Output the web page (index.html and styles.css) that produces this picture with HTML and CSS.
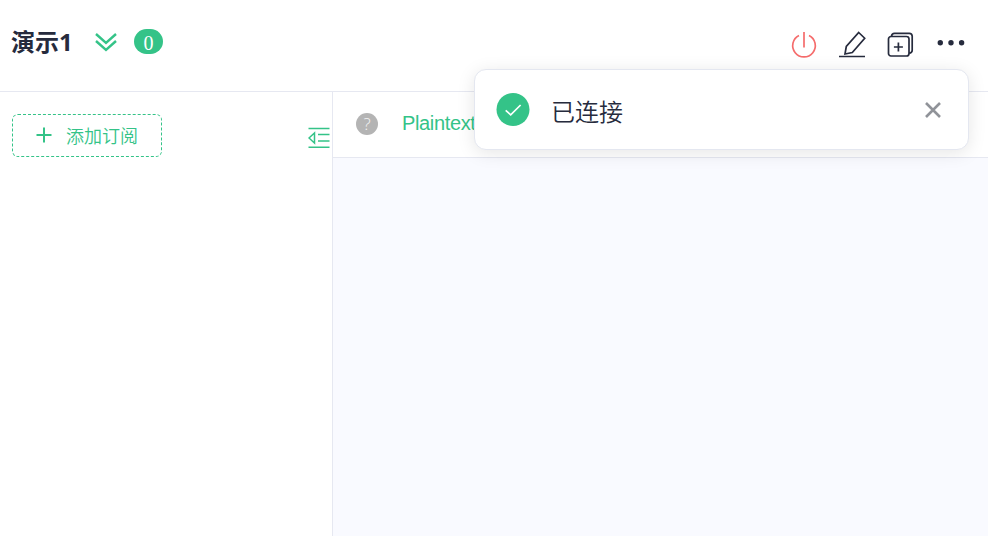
FILE: index.html
```html
<!DOCTYPE html>
<html lang="zh-CN">
<head>
<meta charset="utf-8">
<title>演示1</title>
<link rel="stylesheet" href="styles.css">
</head>
<body>
<div class="app">
  <header class="topbar">
    <h1 class="title">演示1</h1>
    <svg class="chevrons" viewBox="0 0 24 20"><path d="M2 2l10 9L22 2M2 9l10 9L22 9"/></svg>
    <span class="badge">0</span>
    <div class="actions">
      <svg class="power" viewBox="0 0 28 28"><path d="M9 5.500a11.300 11.300 0 1 0 10 0M14 2v15.500"/></svg>
      <svg class="edit" viewBox="0 0 28 28"><path d="M1 26.500h26M20.700 2.500l6 5.700L14.300 22.500 7 24l1.300-7.500z"/></svg>
      <svg class="copy" viewBox="0 0 28 28"><rect x="2.500" y="6.500" width="20.500" height="19.500" rx="2.500"/><path d="M5.500 6.300C5.700 4.300 6.600 3.300 8.500 3.300h14.700c2 0 3 1 3 3v13.900c0 1.700-1 2.700-3 3M12.400 12.500v9M7.900 17h9"/></svg>
      <svg class="dots" viewBox="0 0 28 28"><circle cx="3.300" cy="12.700" r="2.700"/><circle cx="14" cy="12.700" r="2.700"/><circle cx="24.600" cy="12.700" r="2.700"/></svg>
    </div>
  </header>
  <main class="body">
    <aside class="sidebar">
      <button class="add" type="button">
        <svg class="plus" viewBox="0 0 16 16"><path d="M8 .5v15M.5 8h15"/></svg>
        <span>添加订阅</span>
      </button>
      <svg class="fold" viewBox="0 0 22 22"><path d="M.5 1.500h21M10 7.500h11.500M10 14h11.500M.5 20.300h21M1 11l5.500-5v10z"/></svg>
    </aside>
    <section class="content">
      <div class="filters">
        <span class="help">?</span>
        <span class="format">Plaintext</span>
      </div>
      <div class="messages"></div>
    </section>
  </main>
  <div class="toast">
    <svg class="success" viewBox="0 0 34 34"><circle cx="17" cy="16.500" r="16.500"/><path d="M9.700 17.300l5 4.500L24.600 12"/></svg>
    <p class="notice">已连接</p>
    <svg class="close" viewBox="0 0 16 16"><path d="M1 1l14 14M15 1L1 15"/></svg>
  </div>
</div>
</body>
</html>
```
FILE: styles.css
```css
* { box-sizing: border-box; }

body {
  margin: 0;
  font-family: "Liberation Sans", "Noto Sans CJK SC", sans-serif;
  color: #262b3d;
  background: #fff;
}

svg {
  display: block;
  flex: none;
  fill: none;
  stroke: currentColor;
  stroke-width: 1.7;
}

.app {
  position: relative;
  display: flex;
  flex-direction: column;
  height: 536px;
  overflow: hidden;
}

.topbar {
  display: flex;
  align-items: flex-start;
  height: 92px;
  padding: 0 23px 0 11px;
  border-bottom: 1px solid #e6e8f1;
}

.title {
  width: 83px;
  margin: 24px 0 0;
  font: bold 24px/36px "Open Sans", "Noto Sans CJK SC", sans-serif;
  white-space: nowrap;
}

.chevrons {
  width: 24px;
  height: 20px;
  margin-top: 32px;
  color: #34c388;
  stroke-width: 2.4;
}

.badge {
  width: 29px;
  height: 25px;
  margin: 29px 0 0 16px;
  border-radius: 12.5px;
  background: #34c388;
  color: #fff;
  font: 20px/29px "Liberation Serif", serif;
  text-align: center;
}

.actions {
  display: flex;
  gap: 20px;
  margin: 30px 0 0 auto;
}

.actions svg { width: 28px; height: 28px; }
.actions .power { color: #f56c6c; }
.actions .dots { fill: currentColor; stroke: none; margin-left: 3px; }

.body {
  display: flex;
  flex: 1;
}

.sidebar {
  display: flex;
  justify-content: space-between;
  align-items: flex-start;
  width: 333px;
  padding: 22px 2px 0 12px;
  border-right: 1px solid #e6e8f1;
}

.add {
  display: flex;
  align-items: center;
  gap: 14px;
  width: 150px;
  height: 43px;
  padding: 0 0 1px 23px;
  border: 1px dashed #34c388;
  border-radius: 6px;
  background: #fff;
  color: #34c388;
  font: 350 18px/40px "Noto Sans CJK SC", sans-serif;
  white-space: nowrap;
}

.plus { width: 16px; height: 16px; stroke-width: 2; }

.fold {
  width: 22px;
  height: 22px;
  margin-top: 13px;
  color: #34c388;
  stroke-width: 1.5;
}

.content {
  display: flex;
  flex: 1;
  flex-direction: column;
}

.filters {
  display: flex;
  align-items: center;
  gap: 24px;
  height: 66px;
  padding: 0 0 2px 23px;
  border-bottom: 1px solid #e6e8f1;
}

.help {
  width: 22px;
  height: 22px;
  border-radius: 50%;
  background: #b4b4b4;
  color: #f4f4f4;
  font: 300 17px/22px "Open Sans", sans-serif;
  text-align: center;
}

.format {
  margin-top: -2px;
  color: #34c388;
  font-size: 20px;
  letter-spacing: -.35px;
  line-height: 24px;
}

.messages {
  flex: 1;
  background: #f9faff;
}

.toast {
  position: absolute;
  top: 69px;
  left: 474px;
  display: flex;
  align-items: center;
  width: 495px;
  height: 81px;
  padding: 0 27px 0 21px;
  border: 1px solid #e4e7f0;
  border-radius: 12px;
  background: #fff;
  box-shadow: 0 3px 18px rgba(0, 0, 0, .1);
}

.success { width: 34px; height: 34px; }
.success circle { fill: #34c388; stroke: none; }
.success path { stroke: #fff; }

.notice {
  margin: 2px 0 0 21px;
  font: 350 24px/36px "Noto Sans CJK SC", sans-serif;
}

.close {
  width: 16px;
  height: 16px;
  margin-left: auto;
  color: #909399;
  stroke-width: 2.6;
}
```
